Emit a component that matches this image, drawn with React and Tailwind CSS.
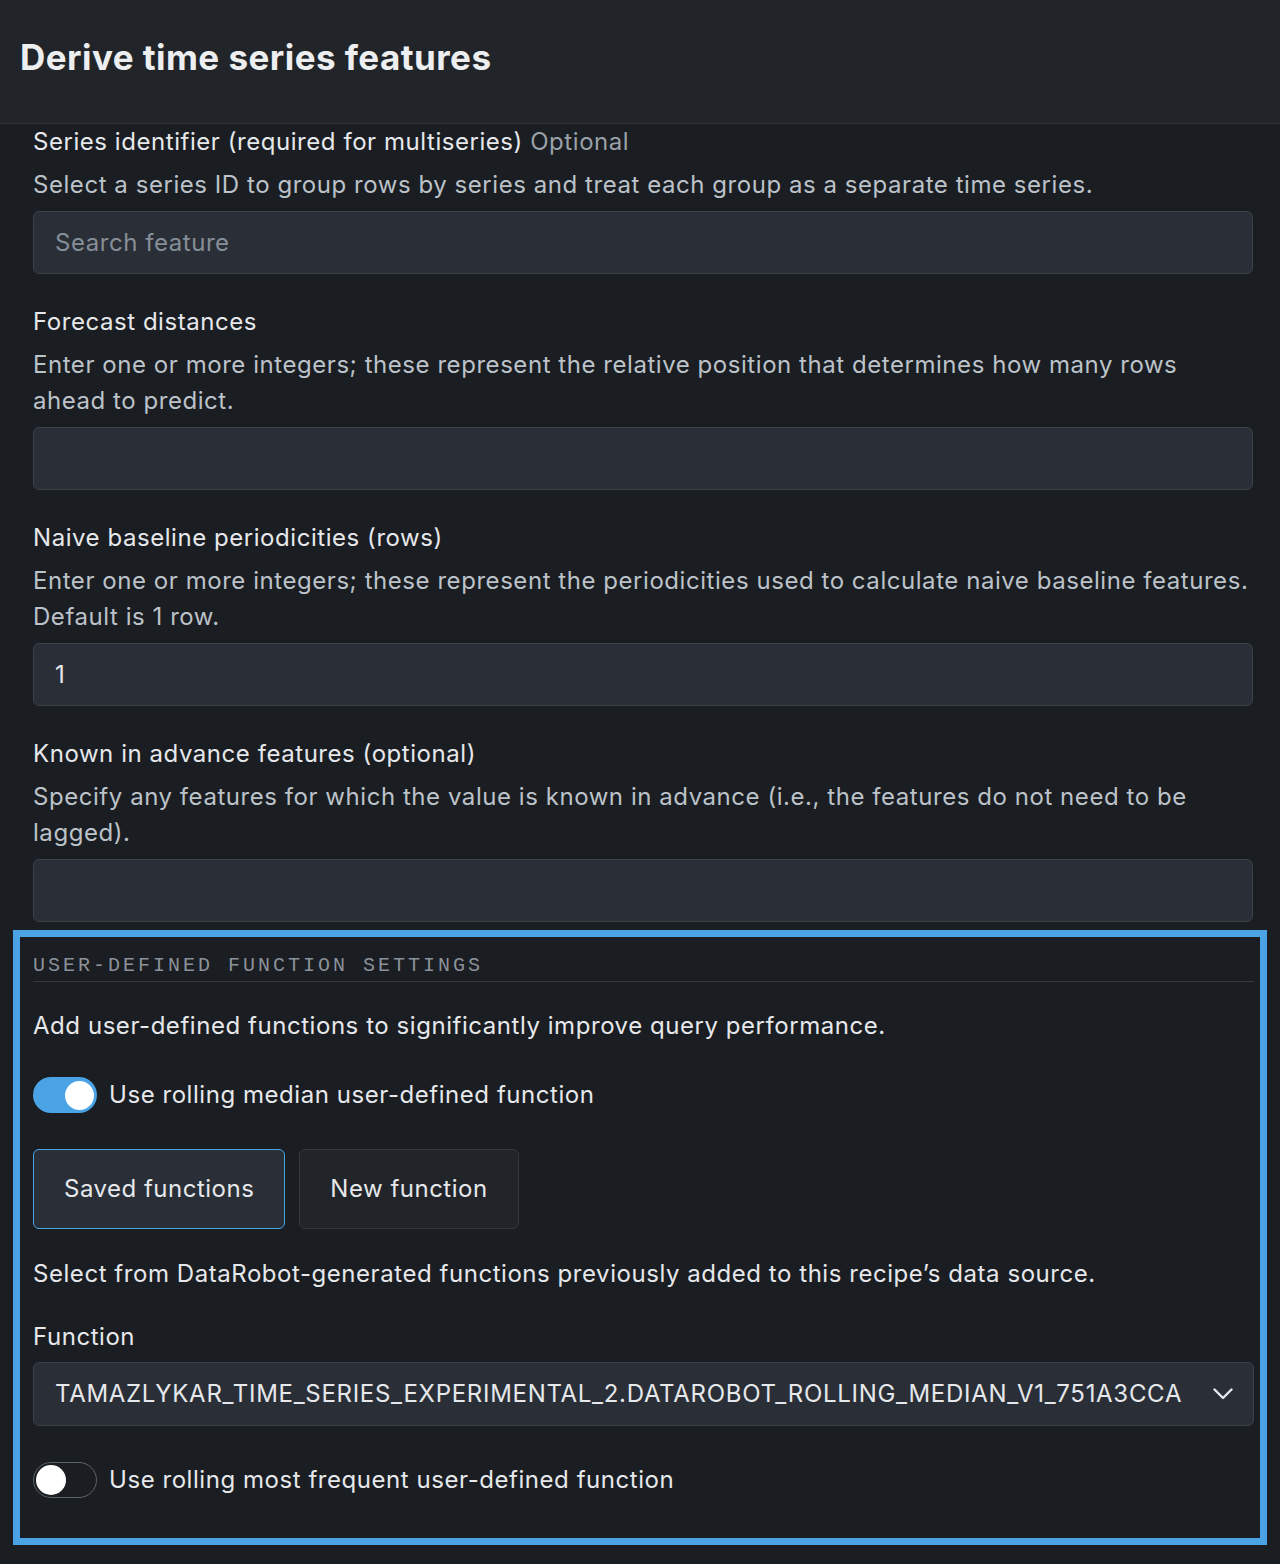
import { useState } from "react";

const Field = ({ label, extra, desc, children }) => (
  <div className="flex flex-col">
    <div className="text-[24px] leading-[36px] tracking-[0.55px] text-[#e6e8eb]">
      {label}
      {extra && <span className="text-[#9aa1a9]"> {extra}</span>}
    </div>
    <div className="mt-[7px] text-[24px] leading-[36px] tracking-[0.55px] text-[#bcc2c9]">{desc}</div>
    <div className="mt-[8px]">{children}</div>
  </div>
);

const TextBox = ({ value, placeholder }) => (
  <div className="h-[63px] rounded-[6px] border border-[#3b4149] bg-[#2a2f37] px-[21px] flex items-center text-[24px] tracking-[0.55px]">
    {value ? (
      <span className="text-[#e6e8eb]">{value}</span>
    ) : (
      <span className="text-[#868e97]">{placeholder}</span>
    )}
  </div>
);

const Toggle = ({ on, onClick }) =>
  on ? (
    <button
      onClick={onClick}
      className="w-[64px] h-[36px] rounded-full bg-[#4aa3e4] flex items-center justify-end pr-[3px] shrink-0"
    >
      <span className="w-[29px] h-[29px] rounded-full bg-white" />
    </button>
  ) : (
    <button
      onClick={onClick}
      className="w-[64px] h-[36px] rounded-full border border-[#5c636b] flex items-center pl-[2px] shrink-0"
    >
      <span className="w-[30px] h-[30px] rounded-full bg-white" />
    </button>
  );

export default function App() {
  const [median, setMedian] = useState(true);
  const [frequent, setFrequent] = useState(false);
  const [tab, setTab] = useState("saved");

  const tabClass = (active) =>
    active
      ? "h-[80px] px-[30px] rounded-[6px] border border-[#4aa3e4] bg-[#2a2f37] text-[24px] tracking-[0.5px] text-[#e6e8eb]"
      : "h-[80px] px-[30px] rounded-[6px] border border-[#33383f] bg-[#212529] text-[24px] tracking-[0.5px] text-[#e6e8eb]";

  return (
    <div className="min-h-[1564px] bg-[#1a1d21] font-['Inter',sans-serif] text-[#e6e8eb]">
      {/* Header */}
      <header className="h-[124px] bg-[#212529] border-b border-[#2c3137] flex items-center px-[20px]">
        <h1 className="text-[35px] font-bold text-[#eceef0] tracking-[0.45px] -mt-[8px]">
          Derive time series features
        </h1>
      </header>

      <div className="pl-[33px] pr-[27px] flex flex-col">
        <Field
          label="Series identifier (required for multiseries)"
          extra="Optional"
          desc="Select a series ID to group rows by series and treat each group as a separate time series."
        >
          <TextBox placeholder="Search feature" />
        </Field>

        <div className="mt-[30px]">
          <Field
            label="Forecast distances"
            desc="Enter one or more integers; these represent the relative position that determines how many rows ahead to predict."
          >
            <TextBox />
          </Field>
        </div>

        <div className="mt-[30px]">
          <Field
            label="Naive baseline periodicities (rows)"
            desc="Enter one or more integers; these represent the periodicities used to calculate naive baseline features. Default is 1 row."
          >
            <TextBox value="1" />
          </Field>
        </div>

        <div className="mt-[30px]">
          <Field
            label="Known in advance features (optional)"
            desc="Specify any features for which the value is known in advance (i.e., the features do not need to be lagged)."
          >
            <TextBox />
          </Field>
        </div>

        {/* User-defined function settings */}
        <section className="mt-[8px] -ml-[20px] -mr-[14px] border-[7px] border-[#4aa3e4] pl-[13px] pr-[6px] pt-[15px] pb-[40px]">
          <div className="border-b border-[#33383f] pb-[1px]">
            <div className="font-['Liberation_Mono',monospace] text-[20px] leading-[28px] tracking-[3px] text-[#8b929a]">
              USER-DEFINED FUNCTION SETTINGS
            </div>
          </div>

          <p className="mt-[28px] text-[24px] leading-[32px] tracking-[0.55px] text-[#e6e8eb]">
            Add user-defined functions to significantly improve query performance.
          </p>

          <div className="mt-[35px] flex items-center gap-[12px]">
            <Toggle on={median} onClick={() => setMedian(!median)} />
            <span className="text-[24px] leading-[32px] tracking-[0.55px]">Use rolling median user-defined function</span>
          </div>

          <div className="mt-[36px] flex gap-[14px]">
            <button onClick={() => setTab("saved")} className={tabClass(tab === "saved")}>
              Saved functions
            </button>
            <button onClick={() => setTab("new")} className={tabClass(tab === "new")}>
              New function
            </button>
          </div>

          <p className="mt-[29px] text-[24px] leading-[32px] tracking-[0.55px]">
            Select from DataRobot-generated functions previously added to this recipe’s data source.
          </p>

          <div className="mt-[31px] text-[24px] leading-[32px] tracking-[0.55px]">Function</div>
          <div className="mt-[9px] h-[64px] rounded-[6px] border border-[#3b4149] bg-[#2a2f37] pl-[21px] pr-[20px] flex items-center justify-between text-[24px]">
            <span className="text-[#e6e8eb] tracking-[0.7px]">
              TAMAZLYKAR_TIME_SERIES_EXPERIMENTAL_2.DATAROBOT_ROLLING_MEDIAN_V1_751A3CCA
            </span>
            <svg width="20" height="12" viewBox="0 0 20 12" fill="none">
              <path d="M1.5 1.5 L10 10 L18.5 1.5" stroke="#e6e8eb" strokeWidth="2.4" strokeLinecap="round" strokeLinejoin="round" />
            </svg>
          </div>

          <div className="mt-[36px] flex items-center gap-[12px]">
            <Toggle on={frequent} onClick={() => setFrequent(!frequent)} />
            <span className="text-[24px] leading-[32px] tracking-[0.55px]">Use rolling most frequent user-defined function</span>
          </div>
        </section>
      </div>
    </div>
  );
}
